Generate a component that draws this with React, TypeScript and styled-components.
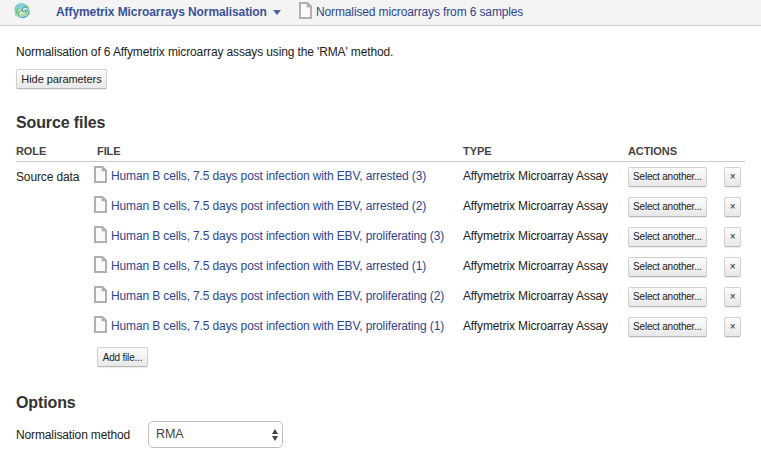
import React from "react";
import styled, { createGlobalStyle } from "styled-components";

const GlobalStyle = createGlobalStyle`
  * { box-sizing: border-box; }
  body {
    margin: 0;
    background: #fff;
    color: #222;
    font-family: "Liberation Sans", Arial, Helvetica, sans-serif;
    font-size: 12px;
    line-height: 16px;
    letter-spacing: -0.13px;
    white-space: nowrap;
  }
  h2, p { margin: 0; }
`;

const Page = styled.div`
  height: 465px;
  overflow: hidden;
`;

const TopBar = styled.header`
  display: flex;
  align-items: flex-start;
  height: 26px;
  padding-left: 14px;
  background: #f4f4f4;
  border-bottom: 1px solid #ccc;
`;

const Logo = styled.svg`
  width: 16px;
  height: 16px;
  margin: 3px 26px 0 0;
`;

const AppMenu = styled.div`
  display: flex;
  align-items: center;
  width: 243px;
  height: 24px;
  color: #3b5199;
  font-weight: bold;
  letter-spacing: -0.09px;
`;

const Caret = styled.span`
  margin-left: 6px;
  border: 4.5px solid transparent;
  border-top: 5px solid #4c62a3;
  border-bottom: 0;
`;

const FileLink = styled.a`
  display: flex;
  align-items: center;
  height: 24px;
  color: #2f4590;
`;

const FileGlyph = styled.svg`
  flex: none;
  width: 13px;
  height: 17px;
  margin: -3px 4px 0 0;
`;

const Content = styled.main`
  padding: 18px 16px 0;
`;

const Button = styled.button<{ $width: number; $size?: number; $spacing?: number }>`
  display: block;
  width: ${(p) => p.$width}px;
  height: 20px;
  padding: 0;
  border: 1px solid #d2d2d2;
  border-bottom-color: #b8b8b8;
  border-radius: 2px;
  background: linear-gradient(#fcfcfc, #e8e8e8);
  box-shadow: 0 1px 1px rgba(0, 0, 0, 0.08);
  color: #222;
  font: ${(p) => p.$size ?? 10}px/17px "Liberation Sans", Arial, sans-serif;
  letter-spacing: ${(p) => p.$spacing ?? -0.2}px;
  text-align: center;
`;

const Intro = styled.section`
  display: grid;
  gap: 9px;
`;

const Heading = styled.h2`
  color: #333;
  font-size: 16px;
  line-height: 20px;
  letter-spacing: -0.12px;
`;

const SourceSection = styled.section`
  margin-top: 24px;
`;

const Columns = styled.div`
  display: grid;
  grid-template-columns: 81px 366px 165px 96px 21px;
`;

const TableHead = styled(Columns)`
  height: 29px;
  padding-top: 10px;
  border-bottom: 1px solid #ccc;
  color: #444;
  font-size: 11px;
  font-weight: bold;
  line-height: 16px;
  letter-spacing: -0.08px;
`;

const TableRow = styled(Columns)`
  height: 30px;
  padding-top: 5px;

  ${FileLink} { height: 18px; margin-left: -3px; }
  ${Button} { padding-bottom: 1px; }
`;

const RoleCell = styled.span`
  padding-top: 2px;
`;

const TypeCell = styled.span`
  padding-top: 1px;
`;

const AddRow = styled.div`
  padding: 5px 0 0 81px;
`;

const OptionsSection = styled.section`
  margin-top: 26px;
`;

const OptionRow = styled.div`
  display: grid;
  grid-template-columns: 132px 135px;
  align-items: center;
  margin-top: 8px;
`;

const OptionLabel = styled.label`
  padding-top: 1px;
`;

const SelectBox = styled.div`
  display: flex;
  align-items: center;
  justify-content: space-between;
  height: 27px;
  padding: 0 4px 0 7px;
  border: 1px solid #bfbfbf;
  border-radius: 5px;
  color: #444;
  font-size: 12.5px;
`;

const SelectValue = styled.span`
  padding-bottom: 2px;
`;

const FileIcon = () => (
  <FileGlyph viewBox="0 0 13 17">
    <path d="M1 1H8.5L12 4.5V16H1Z" fill="#fafafa" stroke="#b0b0b0" strokeWidth="2" />
    <path d="M8 1V5H12Z" fill="#b0b0b0" stroke="#b0b0b0" strokeWidth="0.7" />
  </FileGlyph>
);

const GlobeLogo = () => (
  <Logo viewBox="0 0 16 16" fill="none" strokeLinecap="round">
    <circle cx="8" cy="8" r="7.8" fill="#d3ebe6" />
    <path d="M1 6C2 2 6 0 10 1M1.5 9C3 4 7 2 11 2.5" stroke="#5cbfdc" strokeWidth="1.2" />
    <path d="M2 12C2 8 4 6 7 4.5M5 14C3 11 5 8 8 7" stroke="#7cc35c" strokeWidth="1.3" />
    <path d="M13 4.5C10 3 8 5 8 7S11 9 14 6.5M8 14.5C12 14.5 15 12 15 8" stroke="#3a98c4" strokeWidth="1.2" />
    <path d="M7 11.5C10 13 12.5 11.5 13 9H9.5M12 2L14.5 5" stroke="#8cca60" strokeWidth="1.3" />
    <path d="M4 8.5C3 11 5 14 9 14.5" stroke="#3ca0b8" strokeWidth="0.9" />
  </Logo>
);

const files = [
  "arrested (3)",
  "arrested (2)",
  "proliferating (3)",
  "arrested (1)",
  "proliferating (2)",
  "proliferating (1)",
];

export default function App() {
  return (
    <Page>
      <GlobalStyle />
      <TopBar>
        <GlobeLogo />
        <AppMenu>
          Affymetrix Microarrays Normalisation
          <Caret />
        </AppMenu>
        <FileLink>
          <FileIcon />
          Normalised microarrays from 6 samples
        </FileLink>
      </TopBar>
      <Content>
        <Intro>
          <p>Normalisation of 6 Affymetrix microarray assays using the 'RMA' method.</p>
          <Button $width={91} $size={11} $spacing={-0.07}>Hide parameters</Button>
        </Intro>
        <SourceSection>
          <Heading>Source files</Heading>
          <TableHead>
            <span>ROLE</span>
            <span>FILE</span>
            <span>TYPE</span>
            <span>ACTIONS</span>
          </TableHead>
          {files.map((name, i) => (
            <TableRow key={name}>
              <RoleCell>{i === 0 ? "Source data" : ""}</RoleCell>
              <FileLink>
                <FileIcon />
                Human B cells, 7.5 days post infection with EBV, {name}
              </FileLink>
              <TypeCell>Affymetrix Microarray Assay</TypeCell>
              <Button $width={79}>Select another...</Button>
              <Button $width={17}>×</Button>
            </TableRow>
          ))}
          <AddRow>
            <Button $width={51}>Add file...</Button>
          </AddRow>
        </SourceSection>
        <OptionsSection>
          <Heading>Options</Heading>
          <OptionRow>
            <OptionLabel>Normalisation method</OptionLabel>
            <SelectBox>
              <SelectValue>RMA</SelectValue>
              <svg width="6" height="12" viewBox="0 0 6 12" fill="#444">
                <path d="M3 0L6 5H0ZM0 7H6L3 12Z" />
              </svg>
            </SelectBox>
          </OptionRow>
        </OptionsSection>
      </Content>
    </Page>
  );
}
